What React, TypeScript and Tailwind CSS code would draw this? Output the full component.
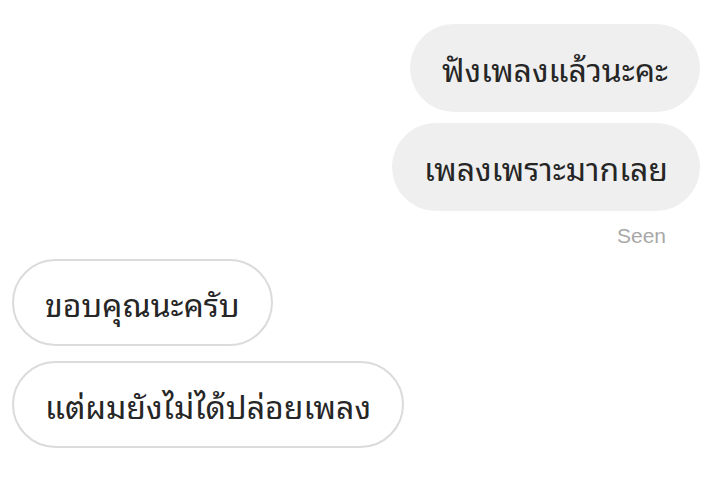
import React from 'react';

type Msg = { text: string; mine: boolean };

const messages: Msg[] = [
  { text: 'ฟังเพลงแล้วนะคะ', mine: true },
  { text: 'เพลงเพราะมากเลย', mine: true },
];

const replies: Msg[] = [
  { text: 'ขอบคุณนะครับ', mine: false },
  { text: 'แต่ผมยังไม่ได้ปล่อยเพลง', mine: false },
];

const Bubble: React.FC<{ msg: Msg }> = ({ msg }) => (
  <div
    className={`flex items-center rounded-full text-[32px] text-[#262626] leading-none ${
      msg.mine
        ? 'h-[88px] px-[32px] bg-[#efefef]'
        : 'h-[87px] px-[31px] bg-white border-2 border-[#dbdbdb]'
    }`}
  >
    {msg.text}
  </div>
);

const App: React.FC = () => {
  return (
    <div
      className="w-[727px] h-[494px] bg-white pt-[24px] pl-[12px] pr-[27px] flex flex-col"
      style={{
        fontFamily:
          '"Noto Sans Thai Looped", Loma, Garuda, Waree, "Noto Sans", "Noto Sans Thai", "DejaVu Sans", sans-serif',
      }}
    >
      <div className="flex flex-col items-end gap-[11px]">
        {messages.map((m, i) => (
          <Bubble key={i} msg={m} />
        ))}
        <span className="text-[21px] text-[#a8a8a8] leading-none mt-[3px] mr-[34px] font-['Liberation_Sans',sans-serif]">
          Seen
        </span>
      </div>
      <div className="flex flex-col items-start gap-[15px] mt-[13px]">
        {replies.map((m, i) => (
          <Bubble key={i} msg={m} />
        ))}
      </div>
    </div>
  );
};

export default App;
